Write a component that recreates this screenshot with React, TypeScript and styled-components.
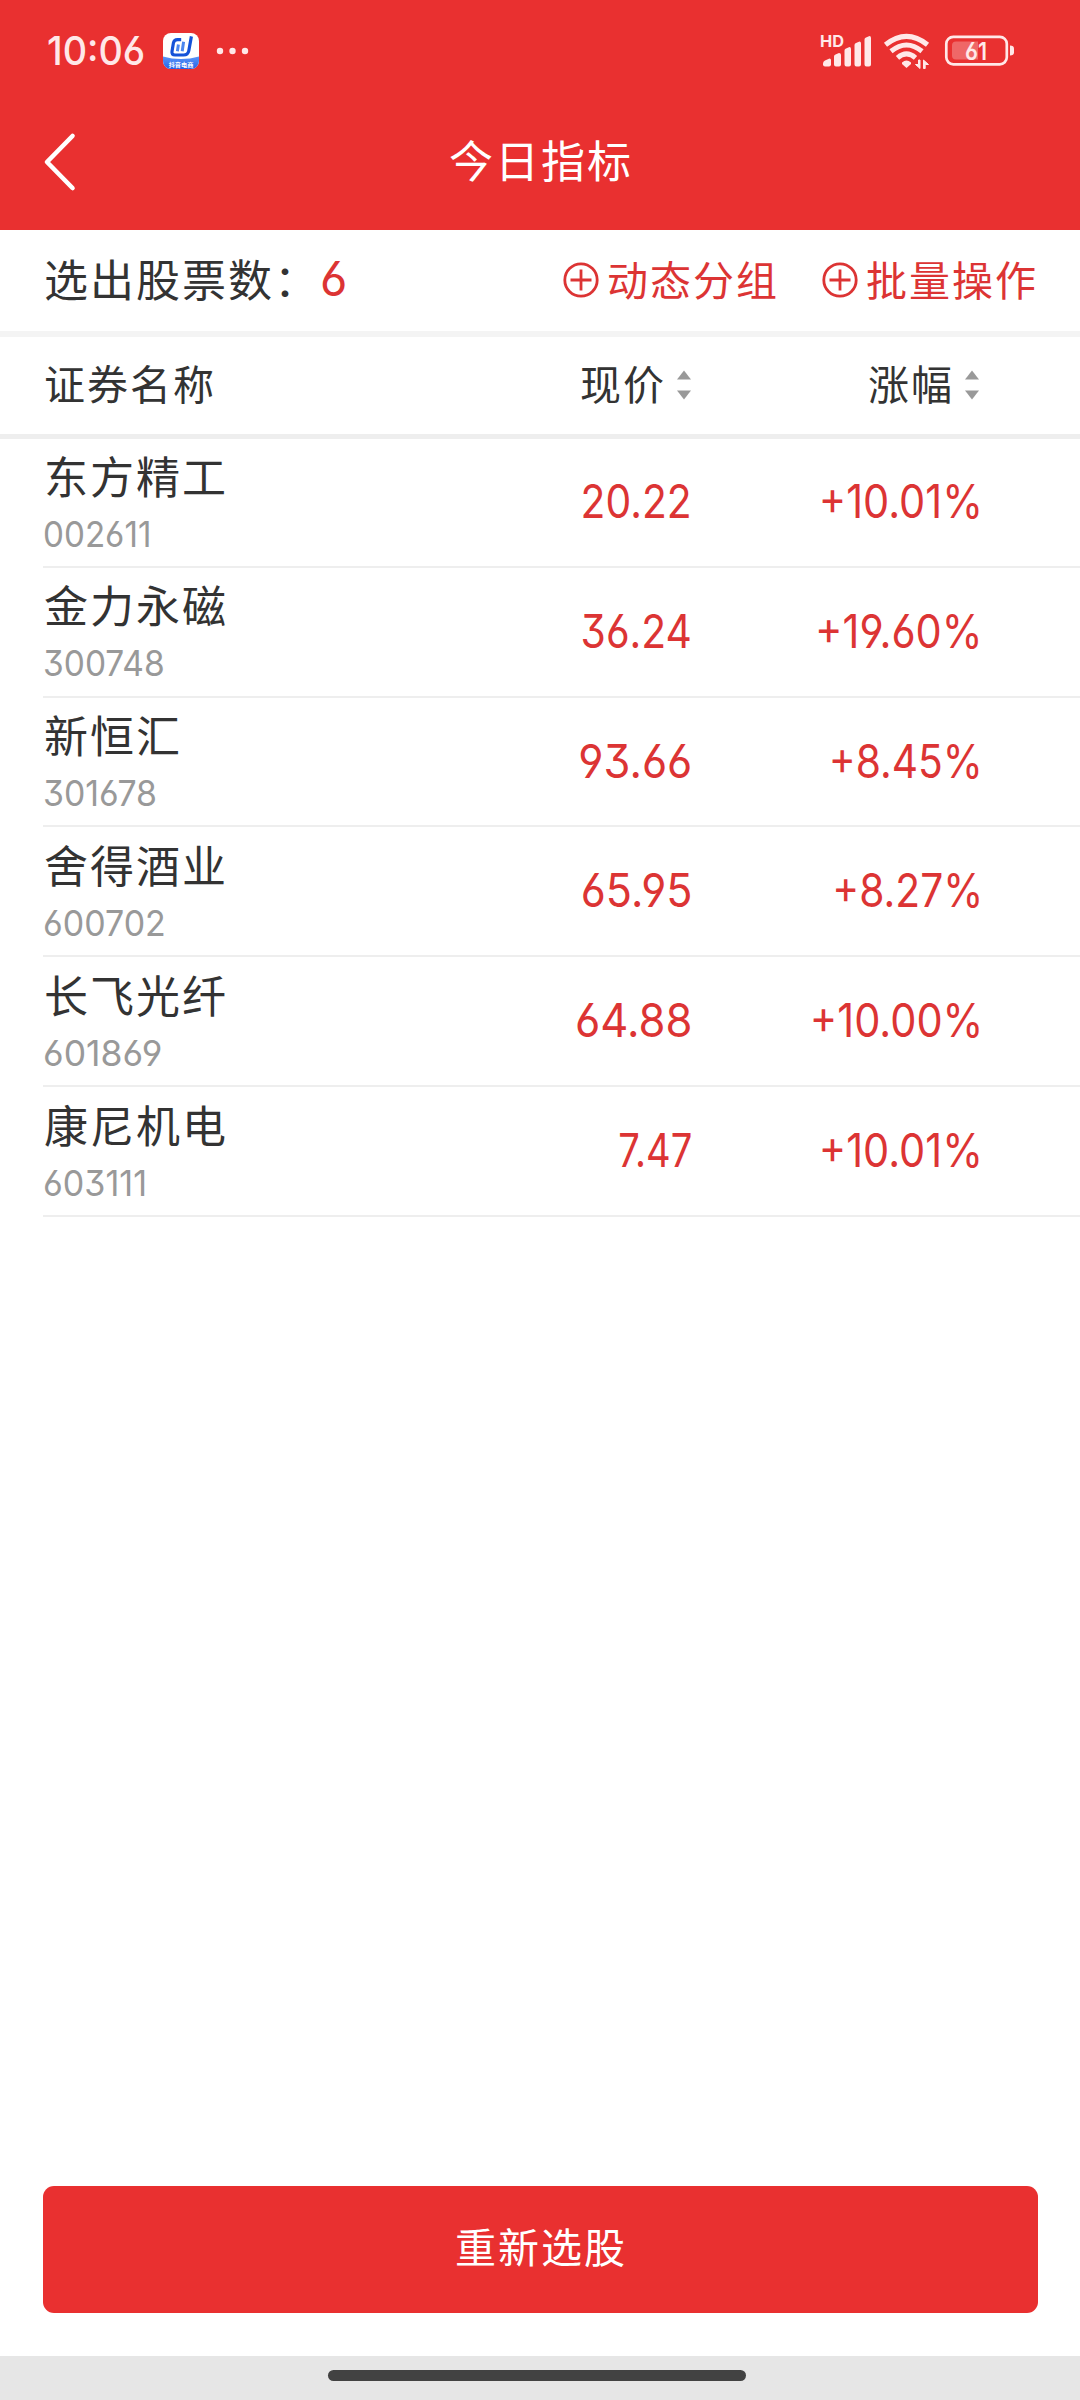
import React from 'react';
import styled, { createGlobalStyle } from 'styled-components';

const RED = '#e93030';
const TEXT_RED = '#dc3434';

const GlobalStyle = createGlobalStyle`
  * { box-sizing: border-box; }
  body { margin: 0; background: #fff; }
  button { font: inherit; border: 0; padding: 0; background: none; color: inherit; letter-spacing: inherit; }
  svg { display: block; flex: none; }
`;

const Screen = styled.div`
  width: 1080px;
  height: 2400px;
  display: flex;
  flex-direction: column;
  background: #fff;
  color: #333;
  overflow: hidden;
  font-family: 'Noto Sans CJK SC', sans-serif;
`;

const Digits = styled.span<{ $size: number; $from?: string; $weight?: number; $scale?: number }>`
  display: inline-block;
  white-space: nowrap;
  font-family: Inter, 'Noto Sans CJK SC', sans-serif;
  font-feature-settings: 'cv03', 'cv04', 'cv09';
  font-size: ${(p) => p.$size}px;
  font-weight: ${(p) => p.$weight ?? 400};
  line-height: 1.2;
  letter-spacing: 0;
  transform: scaleX(${(p) => p.$scale ?? 0.9});
  transform-origin: ${(p) => p.$from ?? 'left'} center;
`;

const TopArea = styled.header`
  height: 230px;
  background: ${RED};
  color: #fff;
  display: flex;
  flex-direction: column;
`;

const StatusBar = styled.div`
  height: 102px;
  padding: 0 64px 0 47px;
  display: flex;
  align-items: center;
  justify-content: space-between;
  color: #ffe8e8;
`;

const StatusGroup = styled.div`
  display: flex;
  align-items: center;
`;

const Clock = styled.div`
  width: 116px;
  padding-top: 2px;
`;

const TitleBar = styled.div`
  height: 120px;
  display: grid;
  grid-template-columns: 120px 1fr 120px;
  align-items: center;
  padding: 0 0 1px;
`;

const BackButton = styled.button`
  padding-left: 42px;
`;

const Title = styled.h1`
  margin: 0;
  padding: 0 0 5px 2px;
  text-align: center;
  font-weight: 400;
  font-size: 44px;
  line-height: 60px;
  letter-spacing: 2px;
`;

const Summary = styled.section`
  height: 107px;
  padding: 0 42px 6px 44px;
  border-bottom: 6px solid #f4f4f4;
  display: flex;
  align-items: center;
  justify-content: space-between;
`;

const Count = styled.div`
  display: flex;
  align-items: center;
  font-size: 44px;
  line-height: 60px;
  letter-spacing: 2px;
  color: #333;
`;

const CountValue = styled.span`
  color: ${TEXT_RED};
  display: flex;
  padding-top: 3px;
`;

const Actions = styled.div`
  display: flex;
  gap: 43px;
`;

const Action = styled.button`
  display: flex;
  align-items: center;
  gap: 8px;
  color: ${TEXT_RED};
  font-size: 41px;
  line-height: 58px;
  letter-spacing: 2px;

  svg { margin-top: 4px; }
`;

const columns = `
  display: grid;
  grid-template-columns: 1fr 300px 288px;
`;

const TableHead = styled.div`
  ${columns}
  height: 102px;
  padding: 0 101px 8px 44px;
  border-bottom: 5px solid #eee;
  align-items: center;
  font-size: 41px;
  line-height: 60px;
  letter-spacing: 2px;
`;

const SortLabel = styled.div`
  display: flex;
  justify-content: flex-end;
  align-items: center;
  gap: 11px;

  svg { margin-top: 6px; }
`;

const Rows = styled.main`
  flex: 1;
  margin-top: -1px;
`;

const Row = styled.div`
  ${columns}
  height: 129.8px;
  margin-left: 43px;
  padding-right: 97px;
  border-bottom: 2px solid #eee;
  align-items: center;
`;

const Security = styled.div`
  display: flex;
  flex-direction: column;
  padding-bottom: 3px;
`;

const Name = styled.div`
  padding-left: 1px;
  font-size: 44px;
  line-height: 60px;
  letter-spacing: 2px;
  height: 69px;
`;

const Code = styled.div`
  color: #999;
  display: flex;
`;

const Value = styled.div<{ $inset?: number }>`
  color: ${TEXT_RED};
  text-align: right;
  padding-right: ${(p) => p.$inset ?? 0}px;
`;

const Footer = styled.footer`
  padding: 0 42px 43px 43px;
`;

const PrimaryButton = styled.button`
  display: block;
  width: 100%;
  height: 127px;
  border-radius: 11px;
  background: ${RED};
  color: #fff;
  font-size: 41px;
  line-height: 119px;
  padding: 0 0 8px 1px;
  letter-spacing: 2px;
`;

const NavBar = styled.div`
  height: 44px;
  background: #e6e6e6;
  display: flex;
  justify-content: center;
  padding: 14px 6px 0 0;
`;

const Handle = styled.div`
  width: 418px;
  height: 11px;
  border-radius: 6px;
  background: #424242;
`;

const AppIcon = () => (
  <svg width="36" height="36" viewBox="0 0 36 36">
    <defs>
      <clipPath id="appIcon"><rect width="36" height="36" rx="8" /></clipPath>
      <linearGradient id="appFoot" x1="0" y1="0" x2="0" y2="1">
        <stop offset="0" stopColor="#5b95f8" />
        <stop offset="1" stopColor="#2462e8" />
      </linearGradient>
    </defs>
    <g clipPath="url(#appIcon)">
      <rect width="36" height="36" fill="#fff" />
      <path d="M0 23.5 Q18 28.5 36 23.5 V36 H0Z" fill="url(#appFoot)" />
      <path d="M18.2 6.600 H14.5 Q11 6.600 10.400 10 L9 18.5 Q8.400 22 12 22 H20.5 Q25 22 25.800 17.800 L28.400 3.400" fill="none" stroke="#1552d8" strokeWidth="3.200" />
      <path d="M15.400 11.5 L14.400 18.2 M20.600 8.800 L19.200 18.2" stroke="#4c86ee" strokeWidth="3" fill="none" />
      <text x="18" y="34" fontSize="6.200" fontWeight="700" textAnchor="middle" fill="#fff" fontFamily="'Noto Sans CJK SC', sans-serif">抖音电商</text>
    </g>
  </svg>
);

const DotsIcon = styled.svg`
  margin-left: 17px;
`;

const MoreDots = () => (
  <DotsIcon width="34" height="8" viewBox="0 0 34 8" fill="currentColor">
    <circle cx="4" cy="4" r="3.200" />
    <circle cx="16.500" cy="4" r="3.200" />
    <circle cx="29" cy="4" r="3.200" />
  </DotsIcon>
);

const StatusIcons = () => (
  <svg width="200" height="44" viewBox="816 29.500 200 44" fill="currentColor">
    <text x="820" y="47" fontSize="16" fontWeight="700" fontFamily="Inter, sans-serif" textLength="24" lengthAdjust="spacingAndGlyphs">HD</text>
    <path d="M823 64q0-2 2-3l4.500-2q1.500 0 1.500 1.500v4.500q0 2-2 2h-4q-2 0-2-2z" />
    <path d="M834 57q0-1.500 1.500-2l3.500-1.500q2 0 2 2v9.500q0 2-2 2h-3q-2 0-2-2z" />
    <path d="M844.500 51q0-1.500 1.500-2l3.500-1.500q1.500 0 1.500 2v15.500q0 2-2 2h-2.500q-2 0-2-2z" />
    <path d="M854.500 45.500q0-1.500 1.500-2l3.500-1.500q1.500 0 1.500 2v21q0 2-2 2h-2.500q-2 0-2-2z" />
    <path d="M864.500 40q0-1.500 1.500-2l3.500-1.500q1.500 0 1.500 2v26.500q0 2-2 2h-2.500q-2 0-2-2z" />
    <g fill="none" stroke="currentColor" strokeWidth="5">
      <path d="M885.500 45.200Q906.500 28.500 927.500 45.200" />
      <path d="M891 51.800Q906.500 39.200 922 51.800" />
      <path d="M897.500 58.300Q906.500 50.500 915.500 58.300" />
    </g>
    <path d="M902 63q4.500-4 9 0l0 1.500-4.500 4-4.500-4z" />
    <path d="M920 60.500v8.500l-4.500-4h3v-4.500zM923.500 69v-8.500l5 4.500h-3.300v4z" stroke="currentColor" strokeWidth="1" />
    <rect x="946.300" y="37.300" width="60.500" height="27.500" rx="7" fill="none" stroke="currentColor" strokeWidth="2.700" />
    <path d="M956 42h22v18h-22q-4 0-4-4v-10q0-4 4-4z" opacity=".3" />
    <path d="M1010 46q4 0 4 3v4q0 3-4 3z" />
    <text x="965" y="60" fontSize="24.500" fontWeight="600" fontFamily="Inter, sans-serif" textLength="22" lengthAdjust="spacingAndGlyphs" style={{ fontFeatureSettings: "'cv03'" }}>61</text>
  </svg>
);

const BackIcon = () => (
  <svg width="36" height="60" viewBox="0 0 36 60" fill="none" stroke="#fff" strokeWidth="4.600" strokeLinecap="round" strokeLinejoin="round">
    <path d="M30.500 4L5 30L30.500 56" />
  </svg>
);

const PlusCircle = () => (
  <svg width="36" height="36" viewBox="0 0 36 36" fill="none" stroke="currentColor" strokeWidth="2.800">
    <circle cx="18" cy="18" r="16.200" />
    <path d="M18 7.500v21M7.500 18h21" />
  </svg>
);

const SortIcon = () => (
  <svg width="14" height="30" viewBox="0 0 14 30" fill="#999">
    <path d="M7 0.500L14 9.500H0Z" />
    <path d="M7 29.500L0 20.500H14Z" />
  </svg>
);

type Stock = {
  name: string;
  code: string;
  price: string;
  change: string;
  fit: [code: number, price: number, change: number];
};

const stocks: Stock[] = [
  { name: '东方精工', code: '002611', price: '20.22', change: '+10.01%', fit: [0.935, 0.877, 0.893] },
  { name: '金力永磁', code: '300748', price: '36.24', change: '+19.60%', fit: [0.943, 0.877, 0.893] },
  { name: '新恒汇', code: '301678', price: '93.66', change: '+8.45%', fit: [0.953, 0.932, 0.876] },
  { name: '舍得酒业', code: '600702', price: '65.95', change: '+8.27%', fit: [0.957, 0.927, 0.876] },
  { name: '长飞光纤', code: '601869', price: '64.88', change: '+10.00%', fit: [1.0, 0.936, 0.893] },
  { name: '康尼机电', code: '603111', price: '7.47', change: '+10.01%', fit: [0.96, 0.82, 0.893] },
];

export default function App() {
  return (
    <Screen>
      <GlobalStyle />
      <TopArea>
        <StatusBar>
          <StatusGroup>
            <Clock><Digits $size={39.5} $weight={500} $scale={0.955}>10:06</Digits></Clock>
            <AppIcon />
            <MoreDots />
          </StatusGroup>
          <StatusIcons />
        </StatusBar>
        <TitleBar>
          <BackButton aria-label="返回"><BackIcon /></BackButton>
          <Title>今日指标</Title>
        </TitleBar>
      </TopArea>
      <Summary>
        <Count>
          选出股票数：
          <CountValue><Digits $size={48} $scale={0.98}>6</Digits></CountValue>
        </Count>
        <Actions>
          <Action><PlusCircle />动态分组</Action>
          <Action><PlusCircle />批量操作</Action>
        </Actions>
      </Summary>
      <TableHead>
        <span>证券名称</span>
        <SortLabel>现价<SortIcon /></SortLabel>
        <SortLabel>涨幅<SortIcon /></SortLabel>
      </TableHead>
      <Rows>
        {stocks.map((s) => (
          <Row key={s.code}>
            <Security>
              <Name>{s.name}</Name>
              <Code><Digits $size={35.5} $scale={s.fit[0]}>{s.code}</Digits></Code>
            </Security>
            <Value $inset={3}><Digits $size={46.5} $from="right" $scale={s.fit[1]}>{s.price}</Digits></Value>
            <Value><Digits $size={46.5} $from="right" $scale={s.fit[2]}>{s.change}</Digits></Value>
          </Row>
        ))}
      </Rows>
      <Footer>
        <PrimaryButton>重新选股</PrimaryButton>
      </Footer>
      <NavBar><Handle /></NavBar>
    </Screen>
  );
}
